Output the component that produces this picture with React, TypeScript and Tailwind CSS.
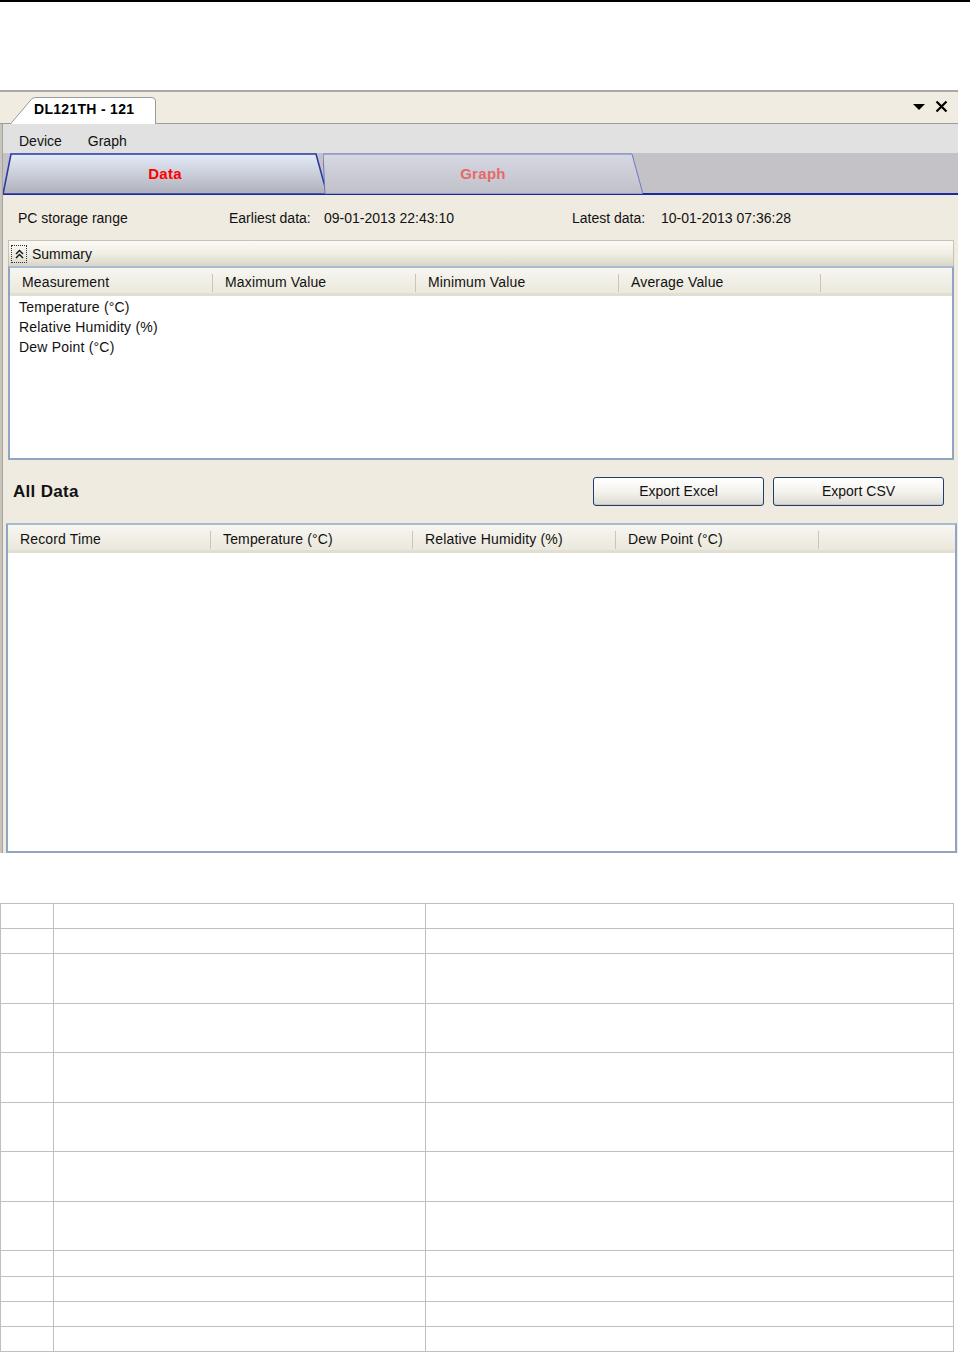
import React from 'react';

const font = { fontFamily: '"Liberation Sans", Arial, sans-serif' };

const HeaderRow: React.FC<{ cols: string[]; widths: string[] }> = ({ cols, widths }) => (
    <div className="flex h-[28px] items-center pt-[4px] bg-gradient-to-b from-[#f7f6f1] to-[#ebe8dc] border-b-[3px] border-[#e2dfd2] text-[14px] text-[#111]">
        {cols.map((c, i) => (
            <div key={c} className={`${widths[i]} h-[18px] flex items-center border-r border-[#c9c6b9] pl-[12px] tracking-[0.15px]`}>{c}</div>
        ))}
        <div className="flex-1" />
    </div>
);

const TabShape: React.FC<{ active?: boolean; w: number }> = ({ active, w }) => (
    <svg className="absolute inset-0" width={w} height={41} viewBox={`0 0 ${w} 41`}>
        <defs>
            <linearGradient id={active ? 'ga' : 'gb'} x1="0" y1="0" x2="0" y2="1">
                <stop offset="0" stopColor={active ? '#e4ecf8' : '#d6d8e2'} />
                <stop offset="1" stopColor={active ? '#aeb0bb' : '#c0c0c8'} />
            </linearGradient>
        </defs>
        <polygon
            points={active ? `0,41 8,1 ${w - 11},1 ${w},41` : `2,41 0,1 ${w - 11},1 ${w},41`}
            fill={`url(#${active ? 'ga' : 'gb'})`}
            stroke={active ? '#2b3aa5' : '#6f78c0'}
            strokeWidth={active ? 1.6 : 1}
        />
    </svg>
);

const App: React.FC = () => {
    const rows = [25, 25, 50, 49, 50, 49, 50, 49, 26, 25, 25, 25];

    return (
        <div className="w-[970px] h-[1352px] bg-white overflow-hidden" style={font}>
            <div className="h-[2px] bg-black" />
            <div className="h-[88px]" />

            {/* app window */}
            <div className="w-[958px] h-[763px] flex flex-col border-t-2 border-[#a8a8a8] bg-[#efebe1]">
                {/* title strip */}
                <div className="h-[32px] flex items-end bg-[#f1ece1] border-b border-[#9d9d9d] relative">
                    <div className="relative ml-[10px] w-[146px] h-[27px] -mb-px">
                        <svg className="absolute inset-0" width="146" height="27" viewBox="0 0 146 27">
                            <path d="M0.5,27 L22,1.5 Q24,0.5 27,0.5 L142,0.5 Q145.5,0.5 145.5,4 L145.5,27" fill="#ffffff" stroke="#9a9a9a" />
                        </svg>
                        <span className="absolute left-[24px] top-[2px] text-[14px] font-bold text-black tracking-[0.3px]">DL121TH - 121</span>
                    </div>
                    <div className="absolute right-[10px] top-[8px] flex items-center gap-[10px]">
                        <svg width="12" height="8" viewBox="0 0 12 8"><path d="M0,1 L12,1 L6,7 Z" fill="#000" /></svg>
                        <svg width="13" height="13" viewBox="0 0 13 13"><path d="M1.5,1.5 L11.5,11.5 M11.5,1.5 L1.5,11.5" stroke="#000" strokeWidth="2.2" /></svg>
                    </div>
                </div>

                <div className="flex flex-1 min-h-0">
                    {/* left gray strip */}
                    <div className="w-[3px] bg-[#c6c4bd] border-r border-[#a6a49c]" />
                    <div className="flex-1 flex flex-col min-w-0">
                        {/* menu */}
                        <div className="h-[29px] bg-[#e1e1e1] flex items-center gap-[26px] pl-[16px] pt-[5px] text-[14px] text-[#111]">
                            <span>Device</span>
                            <span>Graph</span>
                        </div>

                        {/* tabs */}
                        <div className="h-[42px] bg-[#c4c2c6] border-b-2 border-[#1b2aa3] flex items-end">
                            <div className="relative w-[324px] h-[41px] ml-[0px] -mb-px">
                                <TabShape active w={324} />
                                <span className="absolute inset-0 flex items-center justify-center pt-[1px] text-[15px] font-bold text-[#ff0000] tracking-[0.3px]">Data</span>
                            </div>
                            <div className="relative w-[320px] h-[41px] -ml-[4px] -mb-px">
                                <TabShape w={320} />
                                <span className="absolute inset-0 flex items-center justify-center pt-[1px] text-[15px] font-bold text-[#e46a6a] tracking-[0.3px]">Graph</span>
                            </div>
                        </div>

                        {/* storage range */}
                        <div className="h-[45px] flex items-center pt-[1px] text-[14px] text-[#111]">
                            <span className="ml-[15px] w-[211px]">PC storage range</span>
                            <span className="w-[95px]">Earliest data:</span>
                            <span className="w-[248px]">09-01-2013 22:43:10</span>
                            <span className="w-[89px]">Latest data:</span>
                            <span>10-01-2013 07:36:28</span>
                        </div>

                        {/* summary */}
                        <div className="mx-[5px] mr-[4px]">
                            <div className="h-[26px] flex items-center bg-gradient-to-b from-[#fbfaf6] via-[#f1eee4] to-[#d9d6c8] border-t border-x border-[#c6c3b6] text-[14px] text-[#111]">
                                <span className="ml-[2px] w-[16px] h-[18px] border border-dotted border-[#333] flex items-center justify-center">
                                    <svg width="9" height="10" viewBox="0 0 9 10"><path d="M1,5 L4.5,1.5 L8,5 M1,9 L4.5,5.5 L8,9" fill="none" stroke="#111" strokeWidth="1.4" /></svg>
                                </span>
                                <span className="ml-[5px] pt-[1px]">Summary</span>
                            </div>
                            <div className="h-[194px] bg-white border-2 border-[#8fa5c2] border-t-[#a9bbd2]">
                                <HeaderRow cols={['Measurement', 'Maximum Value', 'Minimum Value', 'Average Value']} widths={['w-[203px]', 'w-[203px]', 'w-[203px]', 'w-[202px]']} />
                                <div className="pl-[9px] pt-[1px] text-[14px] text-[#111] leading-[20px] tracking-[0.2px]">
                                    <div>Temperature (°C)</div>
                                    <div>Relative Humidity (%)</div>
                                    <div>Dew Point (°C)</div>
                                </div>
                            </div>
                        </div>

                        {/* all data */}
                        <div className="h-[63px] flex items-center">
                            <span className="ml-[10px] text-[17px] font-bold text-[#111] tracking-[0.3px]">All Data</span>
                            <div className="ml-auto mr-[14px] flex gap-[9px] mt-[0px]">
                                {['Export Excel', 'Export CSV'].map(b => (
                                    <button key={b} className="w-[171px] h-[29px] rounded-[3px] border border-[#1f3d6e] bg-gradient-to-b from-[#ffffff] via-[#f4f3ee] to-[#dcdad2] text-[14px] text-[#111] shadow-[inset_0_-1px_0_#c9c6bc]">{b}</button>
                                ))}
                            </div>
                        </div>

                        <div className="ml-[3px] mr-[1px] h-[330px] bg-white border-2 border-[#8fa5c2] border-t-[#a9bbd2]">
                            <HeaderRow cols={['Record Time', 'Temperature (°C)', 'Relative Humidity (%)', 'Dew Point (°C)']} widths={['w-[203px]', 'w-[202px]', 'w-[203px]', 'w-[203px]']} />
                        </div>
                    </div>
                </div>
            </div>

            <div className="h-[50px]" />

            {/* empty document table */}
            <table className="border-collapse w-[953px] table-fixed">
                <colgroup>
                    <col className="w-[53px]" />
                    <col className="w-[372px]" />
                    <col className="w-[528px]" />
                </colgroup>
                <tbody>
                    {rows.map((h, i) => (
                        <tr key={i} style={{ height: h }}>
                            <td className="border border-[#bfbfbf]" />
                            <td className="border border-[#bfbfbf]" />
                            <td className="border border-[#bfbfbf]" />
                        </tr>
                    ))}
                </tbody>
            </table>
        </div>
    );
};

export default App;
